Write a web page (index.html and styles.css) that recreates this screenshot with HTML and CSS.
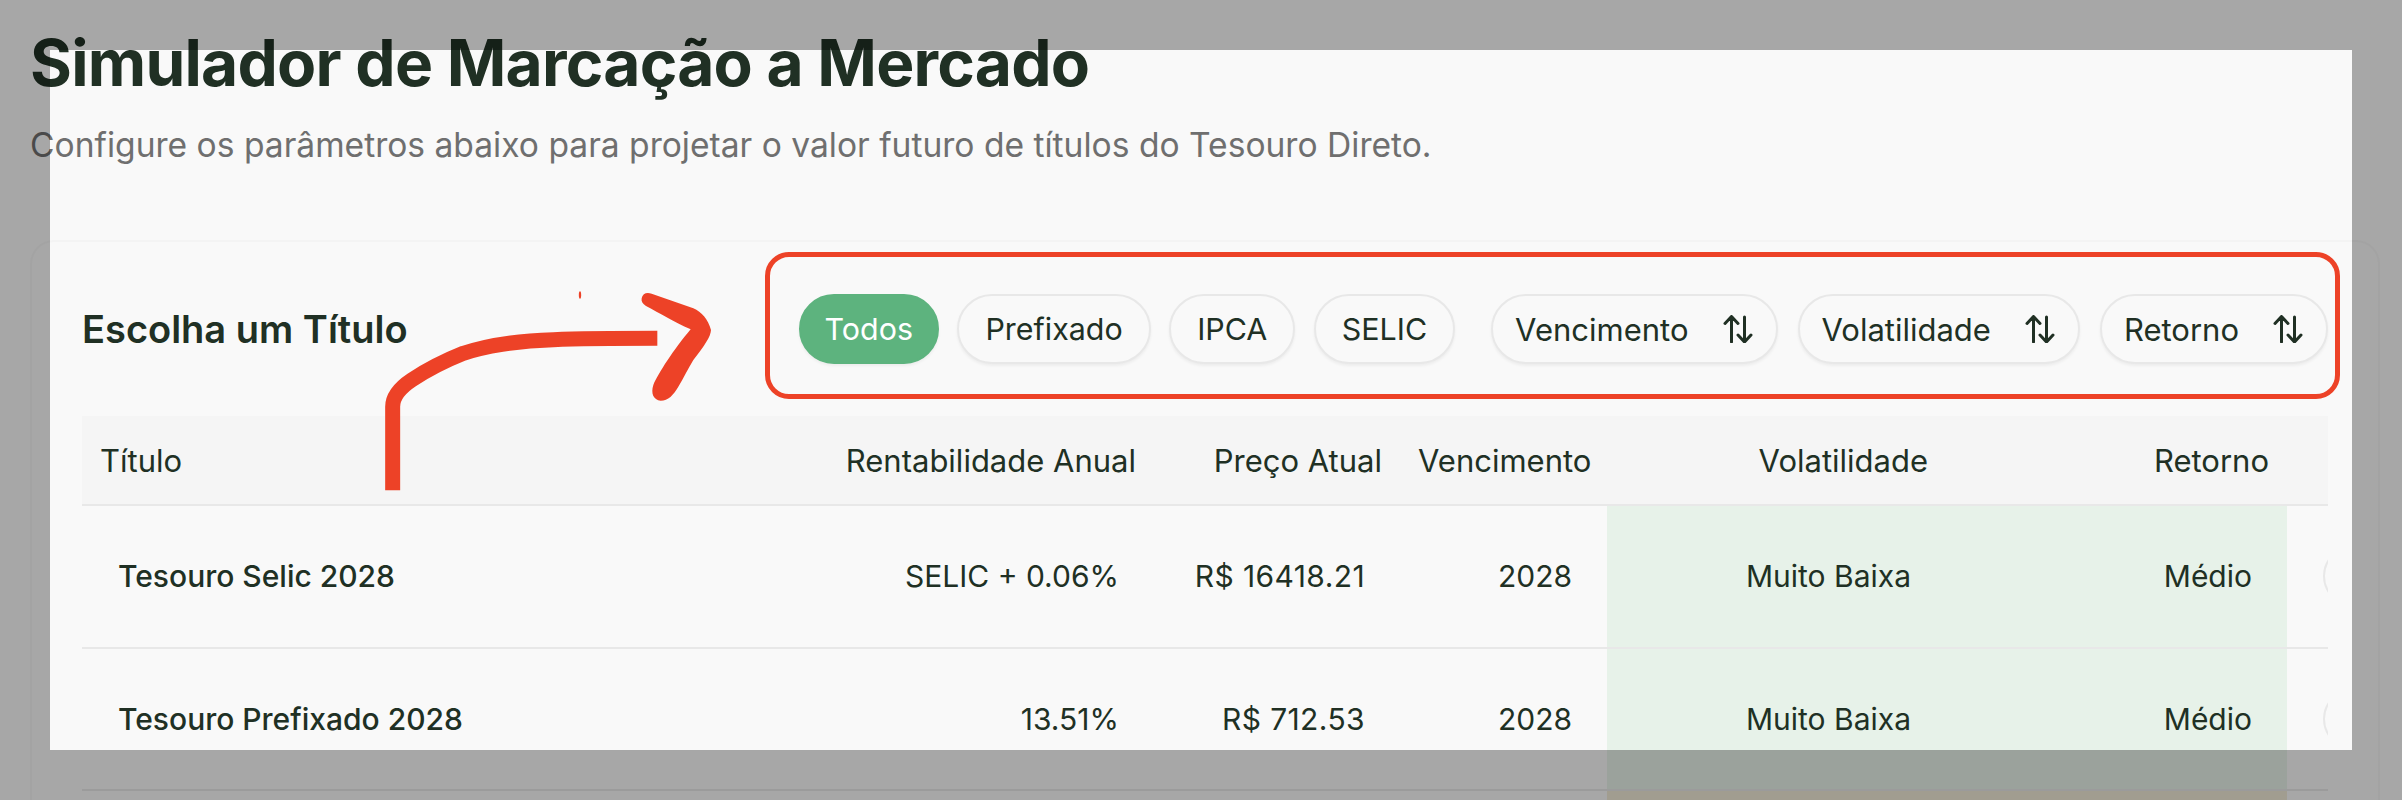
FILE: index.html
```html
<!DOCTYPE html>
<html lang="pt-BR">
<head>
    <meta charset="UTF-8">
    <title>Simulador de Marcação a Mercado</title>
    <link rel="stylesheet" href="styles.css">
</head>
<body>
    <div class="page">
        <h1>Simulador de Marcação a Mercado</h1>
        <p class="subtitle">Configure os parâmetros abaixo para projetar o valor futuro de títulos do Tesouro Direto.</p>

        <div class="card">
            <div class="card-head">
                <h2>Escolha um Título</h2>
                <div class="filters">
                    <div class="chip-group">
                        <button class="chip active">Todos</button>
                        <button class="chip">Prefixado</button>
                        <button class="chip">IPCA</button>
                        <button class="chip">SELIC</button>
                    </div>
                    <div class="chip-group sorts">
                        <button class="chip sort">Vencimento
                            <svg class="sort-icon" viewBox="0 0 30 28"><path d="M8.500 27V1.500M2 8.500l6.500-7 6.500 7M21.500 2v25M15 20l6.500 7 6.500-7"/></svg>
                        </button>
                        <button class="chip sort">Volatilidade
                            <svg class="sort-icon" viewBox="0 0 30 28"><path d="M8.500 27V1.500M2 8.500l6.500-7 6.500 7M21.500 2v25M15 20l6.500 7 6.500-7"/></svg>
                        </button>
                        <button class="chip sort">Retorno
                            <svg class="sort-icon" viewBox="0 0 30 28"><path d="M8.500 27V1.500M2 8.500l6.500-7 6.500 7M21.500 2v25M15 20l6.500 7 6.500-7"/></svg>
                        </button>
                    </div>
                </div>
            </div>

            <table>
                <colgroup>
                    <col class="col-title">
                    <col class="col-rate">
                    <col class="col-price">
                    <col class="col-due">
                    <col class="col-vol">
                    <col class="col-ret">
                    <col class="col-action">
                </colgroup>
                <thead>
                    <tr>
                        <th class="left">Título</th>
                        <th>Rentabilidade Anual</th>
                        <th>Preço Atual</th>
                        <th>Vencimento</th>
                        <th>Volatilidade</th>
                        <th>Retorno</th>
                        <th></th>
                    </tr>
                </thead>
                <tbody>
                    <tr>
                        <td class="left name">Tesouro Selic 2028</td>
                        <td>SELIC + 0.06%</td>
                        <td class="price">R$ 16418.21</td>
                        <td>2028</td>
                        <td class="low">Muito Baixa</td>
                        <td class="low">Médio</td>
                        <td class="action"><button class="row-btn"></button></td>
                    </tr>
                    <tr>
                        <td class="left name">Tesouro Prefixado 2028</td>
                        <td>13.51%</td>
                        <td class="price">R$ 712.53</td>
                        <td>2028</td>
                        <td class="low">Muito Baixa</td>
                        <td class="low">Médio</td>
                        <td class="action"><button class="row-btn"></button></td>
                    </tr>
                    <tr>
                        <td class="left name"></td>
                        <td></td>
                        <td></td>
                        <td></td>
                        <td class="mid"></td>
                        <td class="mid"></td>
                        <td class="action"></td>
                    </tr>
                </tbody>
            </table>
        </div>

        <!-- screenshot annotations -->
        <div class="spotlight"></div>
        <div class="red-box"></div>
        <svg class="red-arrow" viewBox="0 0 1200 690">
            <path class="arrow-line" d="M158 661V410C158 375 185 350 215 330C265 297 320 270 370 250C430 230 530 212 640 209C740 205 850 205 952 205"/>
            <path class="arrow-head" d="M905 85C908 70 920 66 935 71L1060 115C1085 125 1105 150 1113 180C1112 200 1095 225 1060 270C1045 295 1030 325 1015 350C1000 375 985 392 962 392C940 390 932 370 940 345C955 310 1000 240 1052 178C1000 155 960 130 918 108C908 102 903 95 905 85Z"/>
            <ellipse class="arrow-head" cx="720" cy="75" rx="3.500" ry="11"/>
        </svg>
    </div>
</body>
</html>
```

FILE: styles.css
```css
* {
    box-sizing: border-box;
}
html, body {
    margin: 0;
    height: 800px;
    overflow: hidden;
}
body {
    background: #f9f9f9;
    color: #203024;
    font-family: Inter, "Liberation Sans", sans-serif;
}
.page {
    position: relative;
    height: 800px;
    overflow: hidden;
    padding: 24px 22px 0 30px;
}
h1 {
    margin: 0;
    font-size: 64px;
    line-height: 78px;
    font-weight: 700;
    letter-spacing: -0.75px;
}
.subtitle {
    margin: 21px 0 0;
    font-size: 33.6px;
    line-height: 44px;
    color: #6f6f6f;
}
.card {
    margin-top: 73px;
    padding: 0 50px;
    background: #f9f9f9;
    border: 2px solid #f4f4f4;
    border-radius: 24px 24px 0 0;
    height: 600px;
}
.card-head {
    display: flex;
    justify-content: space-between;
    align-items: center;
    padding-top: 52px;
    margin-bottom: 52px;
}
h2 {
    margin: 0;
    font-size: 38px;
    font-weight: 600;
}
.filters {
    display: flex;
    gap: 36px;
}
.chip-group {
    display: flex;
    gap: 18.500px;
}
.chip-group.sorts {
    gap: 20px;
}
.chip {
    display: flex;
    align-items: center;
    height: 70px;
    padding: 0 26px;
    background: #f9f9f9;
    border: 2px solid #e8e8e8;
    border-radius: 35px;
    box-shadow: 0 2px 3px rgba(0, 0, 0, 0.05);
    font: 400 30.4px Inter, "Liberation Sans", sans-serif;
    color: #203024;
}
.chip.active {
    padding: 0 24px;
    background: #5db37e;
    border-color: #5db37e;
    color: #fff;
}
.chip.sort {
    gap: 34px;
    padding: 0 23px 0 22px;
    font-size: 31px;
}
.sort-icon {
    width: 30px;
    height: 28px;
    fill: none;
    stroke: #203024;
    stroke-width: 3;
    stroke-linecap: round;
    stroke-linejoin: round;
}
table {
    width: 2246px;
    table-layout: fixed;
    border-collapse: collapse;
    font-size: 30px;
}
.col-title { width: 700px; }
.col-rate { width: 372px; }
.col-price { width: 246px; }
.col-due { width: 207px; }
.col-vol { width: 339px; }
.col-ret { width: 341px; }
.col-action { width: 41px; }
th {
    height: 89px;
    padding: 0 18px;
    background: #f5f5f5;
    border-bottom: 2px solid #e8e8e8;
    font-size: 31px;
    font-weight: 400;
    text-align: right;
}
td {
    height: 142.500px;
    padding: 0 35px 0 36px;
    border-bottom: 2px solid #e8e8e8;
    text-align: right;
    white-space: nowrap;
}
th.left, td.left {
    text-align: left;
}
td.name {
    font-weight: 500;
}
td.price {
    letter-spacing: 0.4px;
}
td.low {
    background: #e7f2e9;
}
td.mid {
    background: #f0ebd7;
}
td.action {
    overflow: hidden;
    text-align: left;
    padding-right: 0;
}
.row-btn {
    display: block;
    width: 120px;
    height: 60px;
    background: #f9f9f9;
    border: 2px solid #e8e8e8;
    border-radius: 30px;
}
.spotlight {
    position: absolute;
    left: 50px;
    top: 50px;
    width: 2302px;
    height: 700px;
    box-shadow: 0 0 0 2500px rgba(0, 0, 0, 0.33);
}
.red-box {
    position: absolute;
    left: 765px;
    top: 252px;
    width: 1575px;
    height: 147px;
    border: 5px solid #ed4227;
    border-radius: 24px;
}
.red-arrow {
    position: absolute;
    left: 340px;
    top: 270px;
    width: 400px;
    height: 230px;
}
.arrow-line {
    fill: none;
    stroke: #ed4227;
    stroke-width: 45;
}
.arrow-head {
    fill: #ed4227;
}
```
